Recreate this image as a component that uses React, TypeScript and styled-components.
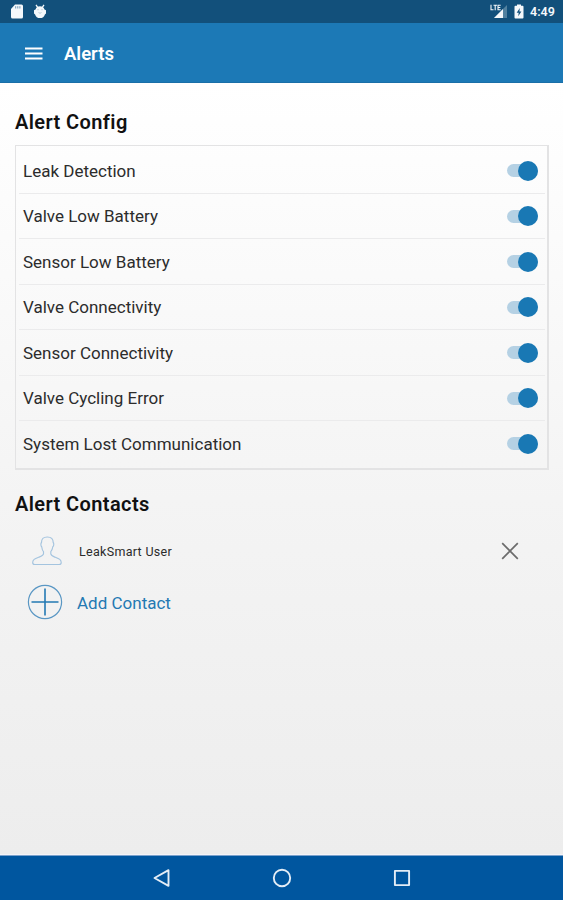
import React from 'react';
import styled, { createGlobalStyle } from 'styled-components';

const GlobalStyle = createGlobalStyle`
  * { box-sizing: border-box; }
  body { margin: 0; font-family: Roboto, "Noto Sans", sans-serif; }
`;

const Screen = styled.div`
  width: 563px;
  height: 900px;
  display: flex;
  flex-direction: column;
  overflow: hidden;
`;

const StatusBar = styled.div`
  height: 23px;
  flex: none;
  display: flex;
  align-items: center;
  padding: 0 6px 0 10px;
  background: #12507b;
  color: #f4f8fb;
`;

const StatusGroup = styled.div<{ $gap: number }>`
  display: flex;
  align-items: center;
  gap: ${(p) => p.$gap}px;
`;

const Spacer = styled.div`
  flex: 1;
`;

const Clock = styled.span`
  width: 27px;
  font-size: 12.5px;
  line-height: 16px;
  font-weight: 600;
  white-space: nowrap;
  padding-top: 1px;
`;

const AppBar = styled.header`
  height: 60px;
  flex: none;
  display: flex;
  align-items: center;
  gap: 21px;
  padding: 2px 24px 0;
  background: #1c79b6;
  border-bottom: 1px solid #1a6fa8;
  color: #fff;
`;

const BarTitle = styled.h1`
  margin: 0;
  font-size: 18.5px;
  line-height: 24px;
  font-weight: 600;
`;

const Content = styled.main`
  flex: 1;
  padding: 26px 14px 0 15px;
  background: linear-gradient(#ffffff 0%, #fbfbfb 20%, #f4f4f4 54%, #ededed 100%);
`;

const SectionTitle = styled.h2<{ $top?: number }>`
  margin: ${(p) => p.$top ?? 0}px 0 0;
  font-size: 20px;
  line-height: 26px;
  font-weight: 600;
  letter-spacing: 0.4px;
  color: #111;
`;

const ConfigList = styled.ul`
  list-style: none;
  margin: 10px 0 0;
  padding: 2px 2px 1px 3px;
  border: solid #e3e3e4;
  border-width: 1px 2px 2px 1px;
`;

const ConfigRow = styled.li`
  height: 45.5px;
  display: flex;
  align-items: center;
  justify-content: space-between;
  padding: 1px 7px 0 4px;
  border-bottom: 1px solid #ebebec;
  &:last-child { border-bottom-color: transparent; }
`;

const ConfigLabel = styled.span`
  font-size: 17px;
  line-height: 22px;
  color: #2c2c2c;
`;

const Track = styled.span`
  width: 31px;
  height: 13px;
  display: flex;
  align-items: center;
  justify-content: flex-end;
  background: #b5d1e4;
  border-radius: 7px;
`;

const Thumb = styled.span`
  flex: none;
  width: 20px;
  height: 20px;
  border-radius: 50%;
  background: #1978b4;
`;

const ContactRow = styled.div`
  height: 48px;
  margin-top: 10px;
  display: flex;
  align-items: center;
  padding: 0 30px 0 16px;
`;

const ContactName = styled.span`
  margin-left: 16px;
  padding-top: 2px;
  flex: 1;
  font-size: 12.5px;
  line-height: 18px;
  letter-spacing: 0.3px;
  color: #2b2b2b;
`;

const AddButton = styled.button`
  height: 36px;
  margin-top: 9px;
  padding: 0 0 0 12px;
  display: flex;
  align-items: center;
  gap: 14px;
  border: 0;
  background: none;
  font: 400 17px/22px Roboto, sans-serif;
  color: #2379b3;
`;

const AddLabel = styled.span`
  padding-top: 2px;
`;

const NavBar = styled.nav`
  height: 46px;
  flex: none;
  display: flex;
  align-items: center;
  justify-content: center;
  gap: 100px;
  background: #00569f;
  border-top: 1px solid #f4f4f8;
  box-shadow: inset 0 1px #7ba1cb;
`;

const alerts = [
  'Leak Detection',
  'Valve Low Battery',
  'Sensor Low Battery',
  'Valve Connectivity',
  'Sensor Connectivity',
  'Valve Cycling Error',
  'System Lost Communication',
];

const SdCardIcon = () => (
  <svg width="14" height="15" viewBox="0 0 14 15">
    <path d="M5 .5h6.5a1.5 1.5 0 0 1 1.5 1.5v11a1.5 1.5 0 0 1-1.5 1.5h-9A1.5 1.5 0 0 1 1 13V5z" fill="currentColor" />
    <path d="M5.700 2.200v2.300M7.800 2.200v2.300M9.900 2.200v2.300" stroke="#6f98b5" strokeWidth="1" />
  </svg>
);

const AndroidIcon = () => (
  <svg width="14" height="15" viewBox="0 0 14 15">
    <path d="M3 .8l2 3M11 .8l-2 3" stroke="currentColor" strokeWidth="1.3" />
    <path d="M1 6.300l1.500-.8C3.300 3.200 4.700 2.200 7 2.200s3.700 1 4.500 3.300l1.500.8v3.200l-1.100.9C11.300 12.800 9.500 14 7 14s-4.300-1.200-4.900-3.600L1 9.500z" fill="currentColor" />
    <path d="M4.300 5.700h1.400M8.300 5.700h1.400M5.500 8.500l1.500.8 1.500-.8" stroke="#a9c1d1" strokeWidth=".8" fill="none" />
  </svg>
);

const SignalIcon = () => (
  <svg width="18" height="15" viewBox="0 0 18 15">
    <path d="M17 1v13H4z" fill="#52819f" />
    <path d="M13 5v9H4z" fill="currentColor" />
    <path d="M1 .8v5h2.500M3.500 1.300H7M5.200 1.300v5M10.700 1.300H8v4.400h2.700M8 3.500h2.300" stroke="currentColor" strokeWidth="1.1" fill="none" />
  </svg>
);

const BatteryIcon = () => (
  <svg width="10" height="15" viewBox="0 0 10 15">
    <path d="M3 .5h4v1.300h1.600q.9 0 .9.900v10.900q0 .9-.9.900H1.400q-.9 0-.9-.9V2.700q0-.9.900-.9H3z" fill="currentColor" />
    <path d="M5.800 4L2.700 8.700h2L4.200 12.300l3.200-4.800H5.400z" fill="#12507b" />
  </svg>
);

const MenuIcon = () => (
  <svg width="19" height="14" viewBox="0 0 19 14">
    <path d="M1 1.600h17.500M1 6.600h17.500M1 11.600h17.500" stroke="currentColor" strokeWidth="2" />
  </svg>
);

const PersonIcon = () => (
  <svg width="32" height="32" viewBox="0 0 32 32" fill="none" stroke="#a4c4df" strokeWidth="1.150">
    <path d="M10.500 7.500C10.500 4 12 2 16.300 2s5.900 2 5.900 5.500c.9.900.7 3.500-.4 4.300-.3 2.300-1 3.800-2 4.900v2.100c0 1.500 1.500 2.300 4 3.300 4.300 1.700 6.400 2.400 6.400 5.400 0 1.400-.6 2-2 2H3.700c-1.400 0-2-.6-2-2 0-3 2.100-3.700 6.400-5.400 2.500-1 4.400-1.800 4.400-3.300v-2.100c-1-1.100-1.500-2.600-1.800-4.900-1-.8-1.100-3.400-.2-4.300z" />
  </svg>
);

const CloseIcon = () => (
  <svg width="18" height="18" viewBox="0 0 18 18">
    <path d="M1.200 1.200l15.600 15.600M16.800 1.200L1.200 16.800" stroke="#6c6c6c" strokeWidth="1.700" />
  </svg>
);

const PlusCircleIcon = () => (
  <svg width="36" height="36" viewBox="0 0 36 36" fill="none" stroke="currentColor">
    <circle cx="18" cy="18" r="16.600" stroke="#5a97c4" strokeWidth="1.200" />
    <path d="M18 4.500v27M4.500 18h27" strokeWidth="1.600" />
  </svg>
);

const NavIcon = ({ children }: { children: React.ReactNode }) => (
  <svg width="20" height="20" viewBox="0 0 20 20" fill="none" stroke="#e4edf6" strokeWidth="1.900" strokeLinejoin="round">
    {children}
  </svg>
);

export default function App() {
  return (
    <>
      <GlobalStyle />
      <Screen>
        <StatusBar>
          <StatusGroup $gap={9}>
            <SdCardIcon />
            <AndroidIcon />
          </StatusGroup>
          <Spacer />
          <StatusGroup $gap={6}>
            <SignalIcon />
            <BatteryIcon />
            <Clock>4:49</Clock>
          </StatusGroup>
        </StatusBar>
        <AppBar>
          <MenuIcon />
          <BarTitle>Alerts</BarTitle>
        </AppBar>
        <Content>
          <SectionTitle>Alert Config</SectionTitle>
          <ConfigList>
            {alerts.map((label) => (
              <ConfigRow key={label}>
                <ConfigLabel>{label}</ConfigLabel>
                <Track>
                  <Thumb />
                </Track>
              </ConfigRow>
            ))}
          </ConfigList>
          <SectionTitle $top={21}>Alert Contacts</SectionTitle>
          <ContactRow>
            <PersonIcon />
            <ContactName>LeakSmart User</ContactName>
            <CloseIcon />
          </ContactRow>
          <AddButton>
            <PlusCircleIcon />
            <AddLabel>Add Contact</AddLabel>
          </AddButton>
        </Content>
        <NavBar>
          <NavIcon>
            <path d="M16.500 2.200v15.600L2.500 10z" />
          </NavIcon>
          <NavIcon>
            <circle cx="10" cy="10" r="8.200" />
          </NavIcon>
          <NavIcon>
            <path d="M2.900 2.900h14.200v14.200H2.900z" />
          </NavIcon>
        </NavBar>
      </Screen>
    </>
  );
}
